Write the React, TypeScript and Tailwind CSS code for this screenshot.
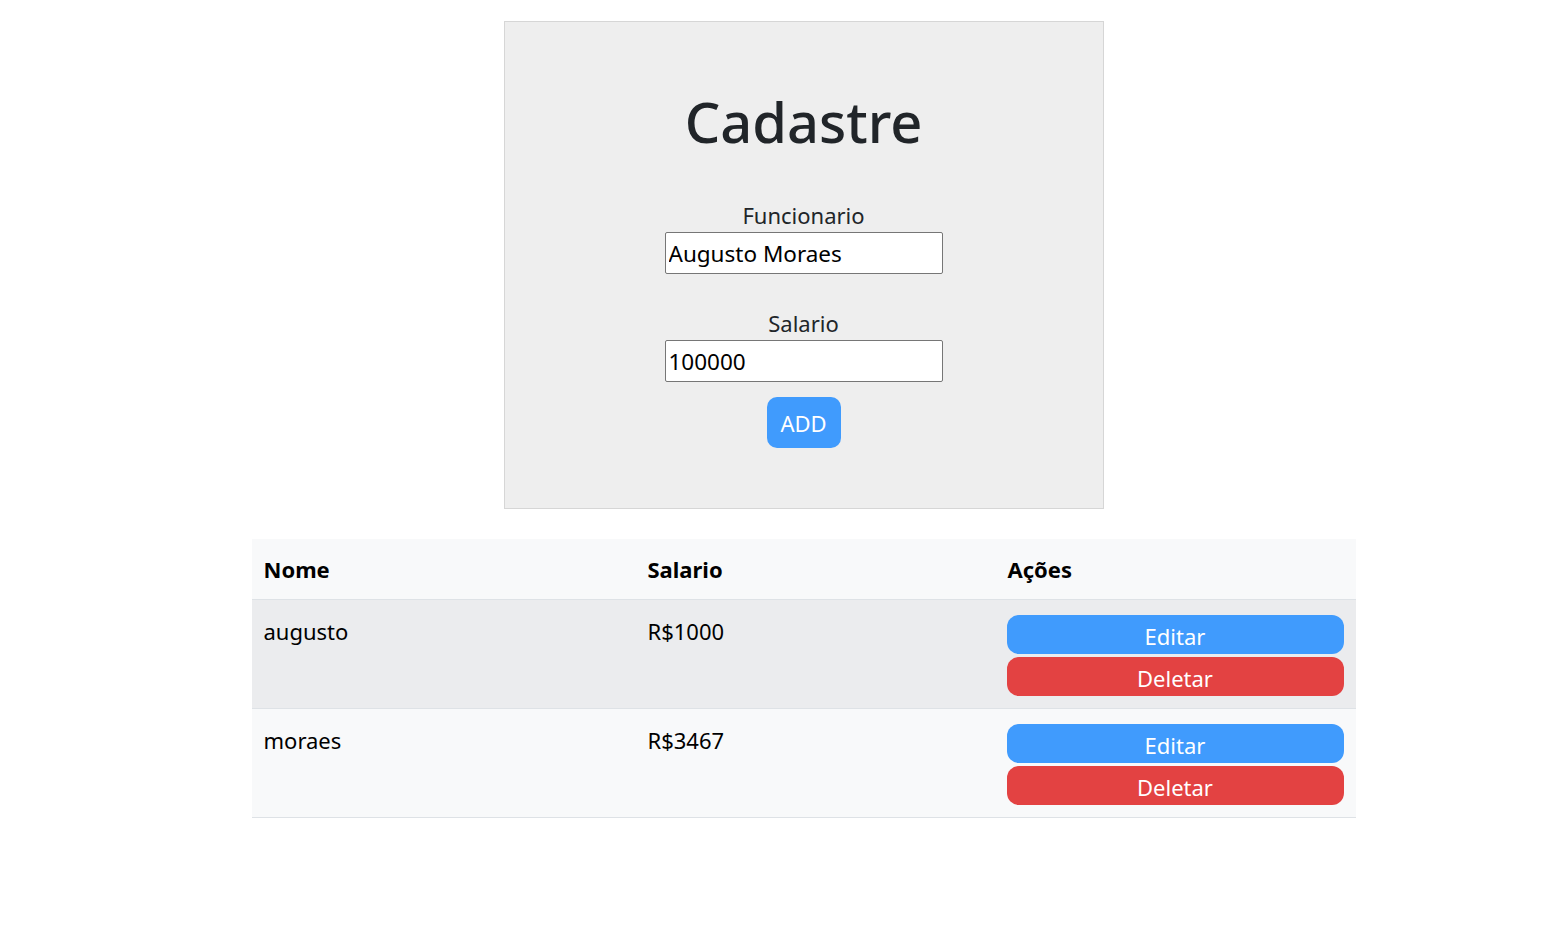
import React from 'react';

const rows = [
  { id: 1, nome: 'augusto', salario: 'R$1000', bg: 'bg-[#ebecee]' },
  { id: 2, nome: 'moraes', salario: 'R$3467', bg: 'bg-[#f8f9fa]' },
];

export default function App() {
  return (
    <div className="min-h-screen bg-white font-['Noto_Sans',sans-serif] text-[#212529]">
      <div className="flex flex-col items-center pl-[46px] pt-[21px]">
        <form className="flex h-[488px] w-[600px] flex-col items-center border border-[#d6d6d6] bg-[#eeeeee]">
          <h1 className="mt-[61px] text-[56px] font-medium leading-[76px]">Cadastre</h1>
          <label className="mb-[4px] mt-[43px] text-[22px] leading-[26px]">Funcionario</label>
          <input
            className="h-[42px] w-[278px] rounded-[2px] border border-[#767676] bg-white px-[3px] text-[22.5px] text-black outline-none"
            defaultValue="Augusto Moraes"
          />
          <label className="mb-[4px] mt-[36px] text-[22px] leading-[26px]">Salario</label>
          <input
            className="h-[42px] w-[278px] rounded-[2px] border border-[#767676] bg-white px-[3px] text-[22.5px] text-black outline-none"
            defaultValue="100000"
          />
          <button type="button" className="mt-[15px] h-[51px] w-[74px] rounded-[10px] bg-[#409bfd] pt-[2px] text-[22px] text-white">
            ADD
          </button>
        </form>

        <div className="mt-[30px] w-[1104px] text-black">
          <div className="grid h-[61px] grid-cols-[384px_360px_360px] items-center border-b border-[#dee2e6] bg-[#f8f9fa] text-[22px] font-bold">
            <div className="px-[12px]">Nome</div>
            <div className="px-[12px]">Salario</div>
            <div className="px-[12px]">Ações</div>
          </div>
          {rows.map((r) => (
            <div key={r.id} className={`grid h-[109px] grid-cols-[384px_360px_360px] border-b border-[#dee2e6] text-[22px] ${r.bg}`}>
              <div className="px-[12px] pt-[15px] leading-[32px]">{r.nome}</div>
              <div className="px-[12px] pt-[15px] leading-[32px]">{r.salario}</div>
              <div className="flex flex-col gap-[3px] pl-[11px] pr-[12px] pt-[15px]">
                <button type="button" className="h-[39px] w-full rounded-[12px] bg-[#409bfd] pt-[3px] text-[22px] leading-[36px] text-white">
                  Editar
                </button>
                <button type="button" className="h-[39px] w-full rounded-[12px] bg-[#e34242] pt-[3px] text-[22px] leading-[36px] text-white">
                  Deletar
                </button>
              </div>
            </div>
          ))}
        </div>
      </div>
    </div>
  );
}
